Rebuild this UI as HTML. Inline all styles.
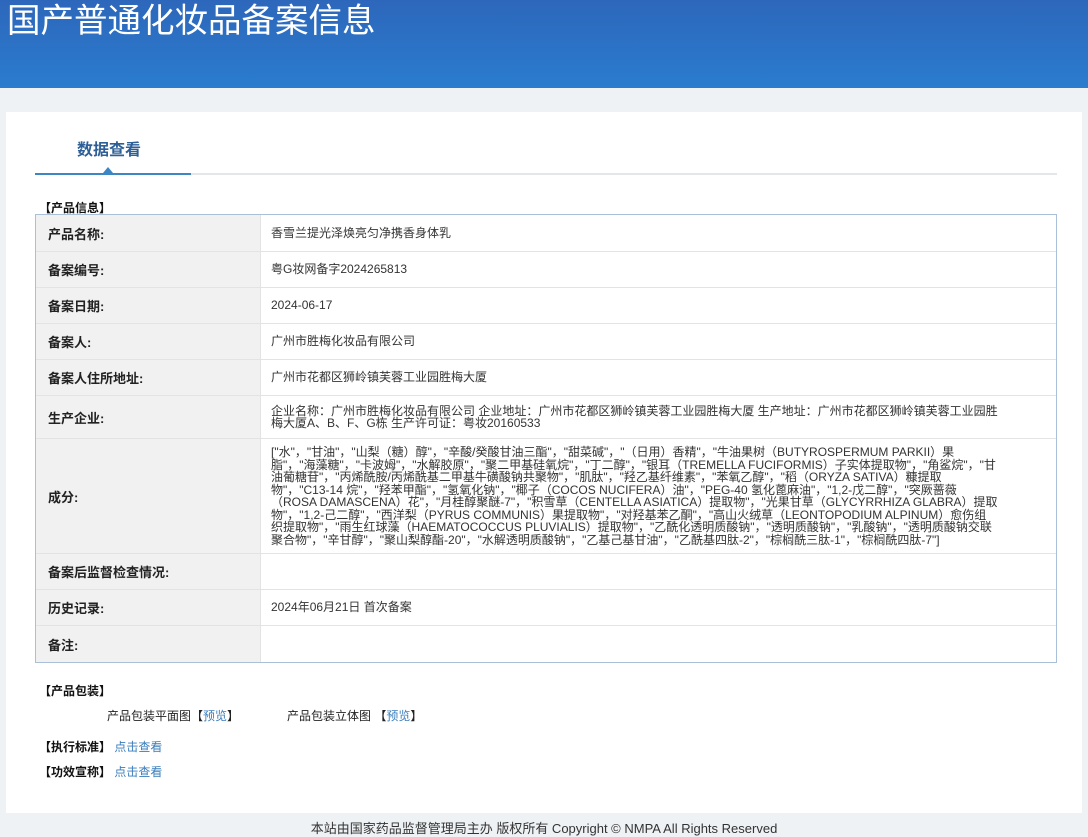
<!DOCTYPE html>
<html><head><meta charset="utf-8">
<style>
*{margin:0;padding:0;box-sizing:border-box}
body{width:1088px;height:837px;background:#eef2f5;font-family:"Liberation Sans","Noto Sans CJK SC",sans-serif;color:#333;position:relative;overflow:hidden}
.hd{position:absolute;left:0;top:0;width:1088px;height:88px;background:linear-gradient(180deg,#2d67bb 0%,#2a7ccf 100%)}
.hd h1{position:absolute;left:7px;top:1px;font-size:33.5px;font-weight:normal;color:#fff;line-height:42px}
.panel{position:absolute;left:6px;top:112px;width:1076px;height:701px;background:#fff}
.tab{position:absolute;left:77px;top:136px;font-size:16px;font-weight:bold;color:#2e5f97}
.line{position:absolute;left:35px;top:173px;width:1022px;height:2px;background:#e4e7ea}
.line b{position:absolute;left:0;top:0;width:156px;height:2px;background:#3d86c4}
.tri{position:absolute;left:103px;top:167px;width:0;height:0;border-left:5px solid transparent;border-right:5px solid transparent;border-bottom:6px solid #3d86c4}
.sec{position:absolute;left:39px;font-size:12px;font-weight:bold;color:#111}
.wrap{position:absolute;left:35px;top:214px;width:1022px;border:1px solid #a9c0d8;overflow:hidden}
table{width:1022px;margin:-1px;border-collapse:collapse;font-size:12px}
td{border:1px solid #e3e3e3;vertical-align:middle}
td.l{width:225px;background:#f1f1f1;font-weight:bold;font-size:13px;padding-left:12px;color:#222}
td.v{padding:0 10px;color:#333;line-height:12.5px}
a{color:#3a7dbb;text-decoration:none}
.foot{position:absolute;left:0;top:818px;width:1088px;text-align:center;font-size:13px;color:#333}
.t{position:absolute;font-size:12px;color:#222}
</style></head><body>
<div class="hd"><h1>国产普通化妆品备案信息</h1></div>
<div class="panel"></div>
<div class="tab">数据查看</div>
<div class="line"><b></b></div>
<div class="tri"></div>
<div class="sec" style="top:199px">【产品信息】</div>
<div class="wrap"><table>
<tr style="height:37px"><td class="l">产品名称:</td><td class="v">香雪兰提光泽焕亮匀净携香身体乳</td></tr>
<tr style="height:36px"><td class="l">备案编号:</td><td class="v">粤G妆网备字2024265813</td></tr>
<tr style="height:36px"><td class="l">备案日期:</td><td class="v">2024-06-17</td></tr>
<tr style="height:36px"><td class="l">备案人:</td><td class="v">广州市胜梅化妆品有限公司</td></tr>
<tr style="height:36px"><td class="l">备案人住所地址:</td><td class="v">广州市花都区狮岭镇芙蓉工业园胜梅大厦</td></tr>
<tr style="height:43px"><td class="l">生产企业:</td><td class="v">企业名称：广州市胜梅化妆品有限公司 企业地址：广州市花都区狮岭镇芙蓉工业园胜梅大厦 生产地址：广州市花都区狮岭镇芙蓉工业园胜<br>梅大厦A、B、F、G栋 生产许可证：粤妆20160533</td></tr>
<tr style="height:115px"><td class="l">成分:</td><td class="v" style="white-space:nowrap">["水"，"甘油"，"山梨（糖）醇"，"辛酸/癸酸甘油三酯"，"甜菜碱"，"（日用）香精"，"牛油果树（BUTYROSPERMUM PARKII）果<br>脂"，"海藻糖"，"卡波姆"，"水解胶原"，"聚二甲基硅氧烷"，"丁二醇"，"银耳（TREMELLA FUCIFORMIS）子实体提取物"，"角鲨烷"，"甘<br>油葡糖苷"，"丙烯酰胺/丙烯酰基二甲基牛磺酸钠共聚物"，"肌肽"，"羟乙基纤维素"，"苯氧乙醇"，"稻（ORYZA SATIVA）糠提取<br>物"，"C13-14 烷"，"羟苯甲酯"，"氢氧化钠"，"椰子（COCOS NUCIFERA）油"，"PEG-40 氢化蓖麻油"，"1,2-戊二醇"，"突厥蔷薇<br>（ROSA DAMASCENA）花"，"月桂醇聚醚-7"，"积雪草（CENTELLA ASIATICA）提取物"，"光果甘草（GLYCYRRHIZA GLABRA）提取<br>物"，"1,2-己二醇"，"西洋梨（PYRUS COMMUNIS）果提取物"，"对羟基苯乙酮"，"高山火绒草（LEONTOPODIUM ALPINUM）愈伤组<br>织提取物"，"雨生红球藻（HAEMATOCOCCUS PLUVIALIS）提取物"，"乙酰化透明质酸钠"，"透明质酸钠"，"乳酸钠"，"透明质酸钠交联<br>聚合物"，"辛甘醇"，"聚山梨醇酯-20"，"水解透明质酸钠"，"乙基己基甘油"，"乙酰基四肽-2"，"棕榈酰三肽-1"，"棕榈酰四肽-7"]</td></tr>
<tr style="height:36px"><td class="l">备案后监督检查情况:</td><td class="v"></td></tr>
<tr style="height:36px"><td class="l">历史记录:</td><td class="v">2024年06月21日 首次备案</td></tr>
<tr style="height:37px"><td class="l">备注:</td><td class="v"></td></tr>
</table></div>
<div class="sec" style="top:682px">【产品包装】</div>
<div class="t" style="left:107px;top:707px">产品包装平面图【<a>预览</a>】</div>
<div class="t" style="left:287px;top:707px">产品包装立体图 【<a>预览</a>】</div>
<div class="sec" style="top:738px">【执行标准】 <a style="font-weight:normal">点击查看</a></div>
<div class="sec" style="top:763px">【功效宣称】 <a style="font-weight:normal">点击查看</a></div>
<div class="foot">本站由国家药品监督管理局主办 版权所有 Copyright © NMPA All Rights Reserved</div>
</body></html>
